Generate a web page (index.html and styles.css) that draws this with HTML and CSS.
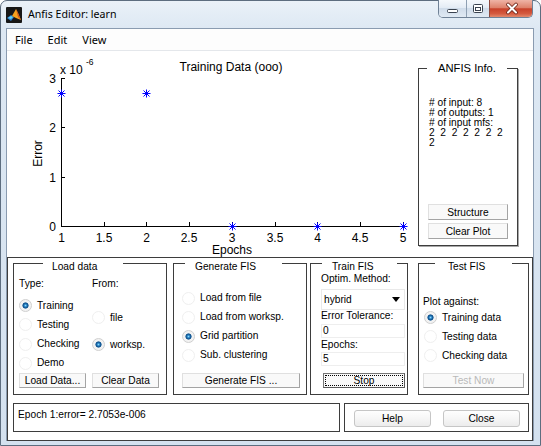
FILE: index.html
```html
<!DOCTYPE html>
<html>
<head>
<meta charset="utf-8">
<title>Anfis Editor: learn</title>
<link rel="stylesheet" href="styles.css">
</head>
<body>
<div class="window">
  <div class="titlebar">
    <svg class="app-icon" width="16" height="16" viewBox="0 0 16 16">
      <rect x="0" y="0" width="16" height="16" rx="1" fill="#171717"/>
      <path d="M1 11 L5 8 L8 10 L5 14 Z" fill="#2a7fd2"/>
      <path d="M2 11 L5 9 L7 10 L5 12 Z" fill="#62d2f2"/>
      <path d="M6 9 L10 2 L12 6 L15 13 L10 11 Z" fill="#f4a21e"/>
      <path d="M10 2 L12 6 L15 13 L12 10 Z" fill="#d2561a"/>
    </svg>
    <span class="title">Anfis Editor: learn</span>
    <div class="caption">
      <div class="cap-btn cap-min">
        <svg width="27" height="17" viewBox="0 0 27 17"><rect x="8.5" y="9.5" width="10" height="3" rx="1" fill="#fff" stroke="#3a4350"/></svg>
      </div>
      <div class="cap-btn cap-max">
        <svg width="22" height="17" viewBox="0 0 22 17"><rect x="6.5" y="4.5" width="9" height="8" rx="1" fill="#fff" stroke="#3a4350"/><rect x="8.5" y="7.5" width="5" height="3" fill="none" stroke="#3a4350"/></svg>
      </div>
      <div class="cap-btn cap-close">
        <svg width="42" height="17" viewBox="0 0 42 17"><path d="M18 4.5 L26 12.5 M26 4.5 L18 12.5" stroke="#6b2418" stroke-width="3.6" stroke-linecap="round"/><path d="M18 4.5 L26 12.5 M26 4.5 L18 12.5" stroke="#ffffff" stroke-width="2" stroke-linecap="round"/></svg>
      </div>
    </div>
  </div>

  <div class="client">
    <div class="menubar">
      <span>File</span>
      <span>Edit</span>
      <span>View</span>
    </div>

    <div class="figure">
      <svg class="plot" width="408" height="206" viewBox="7 51 408 206">
        <defs>
          <path id="ast" d="M-4 0H4M0 -4V4M-3 -3L3 3M-3 3L3 -3" stroke="#0000ff" stroke-width="1" fill="none"/>
        </defs>
        <g stroke="#000" stroke-width="1" fill="none" shape-rendering="crispEdges">
          <path d="M61.5 78V226.5H403.5"/>
          <path d="M104.5 226V222M146.5 226V222M189.5 226V222M232.5 226V222M275.5 226V222M317.5 226V222M360.5 226V222M403.5 226V222"/>
          <path d="M61 177.5H65M61 127.5H65M61 78.5H65"/>
        </g>
        <g class="ticklbl" text-anchor="middle">
          <text x="61.5" y="241.5">1</text>
          <text x="104" y="241.5">1.5</text>
          <text x="146.5" y="241.5">2</text>
          <text x="189" y="241.5">2.5</text>
          <text x="232" y="241.5">3</text>
          <text x="275" y="241.5">3.5</text>
          <text x="317.5" y="241.5">4</text>
          <text x="360" y="241.5">4.5</text>
          <text x="403" y="241.5">5</text>
        </g>
        <g class="ticklbl" text-anchor="end">
          <text x="56" y="230.5">0</text>
          <text x="56" y="181.5">1</text>
          <text x="56" y="131.5">2</text>
          <text x="56" y="82.5">3</text>
        </g>
        <text class="ticklbl" x="60" y="73.5">x 10</text>
        <text class="sup" x="86" y="65">-6</text>
        <text class="ticklbl" x="231" y="71" text-anchor="middle">Training Data (ooo)</text>
        <text class="ticklbl" x="232" y="254" text-anchor="middle">Epochs</text>
        <text class="ticklbl" text-anchor="middle" transform="translate(41.5 153.5) rotate(-90)">Error</text>
        <use href="#ast" x="61.5" y="93.5"/>
        <use href="#ast" x="146.5" y="93.5"/>
        <use href="#ast" x="232.5" y="226.5"/>
        <use href="#ast" x="317.5" y="226.5"/>
        <use href="#ast" x="403.5" y="226.5"/>
      </svg>

      <div class="info-panel">
        <div class="info-title">ANFIS Info.</div>
        <div class="info-text">
          <div class="info-line"># of input: 8</div>
          <div class="info-line"># of outputs: 1</div>
          <div class="info-line"># of input mfs:</div>
          <div class="info-line">2  2  2  2  2  2  2</div>
          <div class="info-line">2</div>
        </div>
        <button class="btn info-btn">Structure</button>
        <button class="btn info-btn info-btn-2">Clear Plot</button>
      </div>
    </div>

    <div class="lower">
      <div class="panel-row">
        <div class="panel p-load">
          <div class="ptitle">Load data</div>
          <div class="cols">
            <div class="col col-type">
              <div class="lbl">Type:</div>
              <div class="radio on first">Training</div>
              <div class="radio">Testing</div>
              <div class="radio">Checking</div>
              <div class="radio">Demo</div>
            </div>
            <div class="col col-from">
              <div class="lbl">From:</div>
              <div class="radio r-file">file</div>
              <div class="radio on r-ws">worksp.</div>
            </div>
          </div>
          <div class="btnrow">
            <button class="btn load-btn">Load Data...</button>
            <button class="btn load-btn">Clear Data</button>
          </div>
        </div>

        <div class="panel p-gen">
          <div class="ptitle">Generate FIS</div>
          <div class="gen-radios">
            <div class="radio r19">Load from file</div>
            <div class="radio r19">Load from worksp.</div>
            <div class="radio r19 on">Grid partition</div>
            <div class="radio r19">Sub. clustering</div>
          </div>
          <button class="btn gen-btn">Generate FIS ...</button>
        </div>

        <div class="panel p-train">
          <div class="ptitle">Train FIS</div>
          <div class="tlbl">Optim. Method:</div>
          <div class="dropdown">
            <span>hybrid</span>
            <svg width="8" height="5" viewBox="0 0 8 5"><path d="M0 0H8L4 5Z" fill="#000"/></svg>
          </div>
          <div class="tlbl">Error Tolerance:</div>
          <div class="edit">0</div>
          <div class="tlbl t-epochs">Epochs:</div>
          <div class="edit e-epochs">5</div>
          <button class="btn stop-btn">Stop</button>
        </div>

        <div class="panel p-test">
          <div class="ptitle">Test FIS</div>
          <div class="plot-against">Plot against:</div>
          <div class="test-radios">
            <div class="radio r19 on">Training data</div>
            <div class="radio r19">Testing data</div>
            <div class="radio r19">Checking data</div>
          </div>
          <button class="btn test-btn" disabled>Test Now</button>
        </div>
      </div>

      <div class="bottom-row">
        <div class="status">Epoch 1:error= 2.7053e-006</div>
        <div class="help-frame">
          <button class="wbtn">Help</button>
          <button class="wbtn">Close</button>
        </div>
      </div>
    </div>
  </div>
</div>
</body>
</html>
```

FILE: styles.css
```css
* { box-sizing: border-box; }

html, body {
  margin: 0;
  padding: 0;
}

body {
  width: 541px;
  height: 446px;
  overflow: hidden;
  background: #ffffff;
  font-family: "Liberation Sans", Arial, sans-serif;
  font-size: 10.2px;
  color: #000;
}

/* ---------- generic controls ---------- */
.btn {
  flex: none;
  font: inherit;
  color: #000;
  padding: 0;
  margin: 0;
  height: 15px;
  line-height: 13px;
  background: #f9f9f9;
  border: 1px solid;
  border-color: #e0e0e0 #a4a4a4 #a4a4a4 #e0e0e0;
  text-align: center;
  white-space: nowrap;
}

.btn:disabled {
  color: #b9b9b9;
}

.radio {
  display: flex;
  align-items: center;
  height: 19.3px;
  line-height: 12px;
  white-space: nowrap;
}

.radio::before {
  content: "";
  flex: none;
  width: 11px;
  height: 11px;
  margin-right: 5px;
  border-radius: 50%;
  border: 1px solid #efefef;
  background: #fff;
}

.radio.on::before {
  border-color: #cfcfcf;
  background: radial-gradient(circle, #8fd8fa 0, #2f8ccc 1.2px, #10508c 2.4px, #1d5f98 2.8px, #f2f2f2 3.4px);
}

.r19 { height: 19px; }

/* ---------- window chrome ---------- */
.window {
  width: 541px;
  height: 446px;
  border: 1px solid #5d6d7f;
  border-radius: 7px 7px 0 0;
  background: linear-gradient(180deg, #eaf1f8 0px, #dde8f3 28px, #d4e1ef 100%);
  padding-bottom: 4px;
  display: flex;
  flex-direction: column;
}

.titlebar {
  flex: none;
  height: 27px;
  display: flex;
  align-items: flex-start;
}

.app-icon {
  flex: none;
  margin: 6px 0 0 5px;
}

.title {
  margin: 5.5px 0 0 6px;
  font-family: "Noto Sans", "Open Sans", sans-serif;
  font-size: 10.6px;
  line-height: 15px;
  color: #000;
}

.caption {
  margin: -1px 7px 0 auto;
  height: 18px;
  display: flex;
  border: 1px solid #6f8196;
  border-top: none;
  border-radius: 0 0 5px 5px;
  overflow: hidden;
}

.cap-btn {
  height: 17px;
  display: flex;
}

.cap-min {
  width: 27px;
  background: linear-gradient(180deg, #f5f8fc 0%, #e4ecf5 45%, #d0dcea 50%, #e0e9f3 100%);
}

.cap-max {
  width: 23px;
  border-left: 1px solid #8e9fb2;
  background: linear-gradient(180deg, #f5f8fc 0%, #e4ecf5 45%, #d0dcea 50%, #e0e9f3 100%);
}

.cap-close {
  width: 43px;
  border-left: 1px solid #8e4a3f;
  background: linear-gradient(180deg, #efb4a6 0%, #de826c 45%, #c8412a 52%, #d45a3f 80%, #e48a6d 100%);
}

/* ---------- client ---------- */
.client {
  flex: 1;
  min-height: 0;
  margin: 0 6px 0 5px;
  border: 1px solid #8a9bb0;
  border-bottom: none;
  background: #fff;
  display: flex;
  flex-direction: column;
}

.menubar {
  flex: none;
  height: 22px;
  border-bottom: 1px solid #e4e7eb;
  display: flex;
  align-items: center;
  padding-left: 8px;
  gap: 15px;
  font-family: "Noto Sans", "Open Sans", sans-serif;
  font-size: 11px;
  background: #fdfdfd;
}

.figure {
  flex: none;
  height: 206px;
  display: flex;
}

.plot {
  flex: none;
  display: block;
}

.ticklbl {
  font-family: "Liberation Sans", Arial, sans-serif;
  font-size: 12px;
  fill: #000;
}

.sup {
  font-family: "Liberation Sans", Arial, sans-serif;
  font-size: 8.5px;
  fill: #000;
}

/* ---------- ANFIS info ---------- */
.info-panel {
  flex: none;
  width: 100px;
  height: 178px;
  margin: 17px 0 0 3px;
  border: 1px solid #3d3d3d;
  box-shadow: 1px 1px 0 #a8a8a8;
  display: flex;
  flex-direction: column;
  padding-bottom: 6px;
}

.info-title {
  flex: none;
  margin: -7px 0 0 8px;
  width: 80px;
  height: 13px;
  line-height: 13px;
  font-size: 11.2px;
  text-align: center;
  background: #fff;
  white-space: nowrap;
}

.info-text {
  margin-top: 22.7px;
  padding-left: 10px;
  font-size: 10.2px;
}

.info-line {
  height: 10px;
  line-height: 10px;
  white-space: pre;
}

.info-panel .info-btn {
  margin: auto 0 0 9px;
  width: 80px;
  height: 16px;
}

.info-panel .info-btn-2 {
  margin-top: 3px;
}

/* ---------- lower area ---------- */
.lower {
  flex: none;
  height: 184px;
  border: 1px solid #3d3d3d;
  padding: 5px 0 0 5px;
}

.panel-row {
  display: flex;
  height: 132px;
}

.panel {
  flex: none;
  height: 132px;
  border: 1px solid #3d3d3d;
  display: flex;
  flex-direction: column;
  padding-bottom: 6px;
}

.ptitle {
  flex: none;
  height: 12px;
  line-height: 12px;
  margin-top: -3px;
  background: #fff;
  white-space: nowrap;
}

.p-load { width: 154px; }
.p-load .ptitle { margin-left: 29px; width: 80px; padding-left: 9px; }

.p-gen { width: 134px; margin-left: 6px; }
.p-gen .ptitle { margin-left: 11px; width: 97px; padding-left: 10px; }

.p-train { width: 98px; margin-left: 3px; }
.p-train .ptitle { margin-left: 11px; width: 75px; padding-left: 10px; }

.p-test { width: 111px; margin-left: 10px; }
.p-test .ptitle { margin-left: 16px; width: 77px; padding-left: 13px; }

/* load data */
.cols {
  display: flex;
  margin-top: 3.5px;
  padding-left: 5px;
}

.col {
  display: flex;
  flex-direction: column;
}

.col-type { width: 73px; }

.lbl {
  height: 13px;
  line-height: 13px;
}

.col-type .first { margin-top: 6.4px; }
.r-file { margin-top: 18.4px; }
.r-ws { margin-top: 7.7px; }

.btnrow {
  margin-top: auto;
  padding-left: 5px;
  display: flex;
  gap: 6px;
}

.btnrow .load-btn { width: 67px; }

/* generate fis */
.gen-radios {
  margin-top: 15.6px;
  padding-left: 8px;
}

.p-gen .gen-btn {
  margin: auto 0 0 8px;
  width: 118px;
}

/* train fis */
.tlbl {
  height: 12px;
  line-height: 12px;
  padding-left: 10px;
  white-space: nowrap;
}

.dropdown {
  margin: 4px 0 0 10px;
  width: 84px;
  height: 21px;
  border: 1px solid #e9e9e9;
  display: flex;
  align-items: center;
  justify-content: space-between;
  padding: 0 4px 0 2px;
}

.edit {
  margin: 2px 0 0 10px;
  width: 84px;
  height: 14px;
  line-height: 12px;
  border: 1px solid #eeeeee;
  padding-left: 1px;
}

.t-epochs { margin-top: 1px; }
.e-epochs { margin-top: 1px; }

.p-train .stop-btn {
  margin: auto 0 0 12px;
  width: 82px;
  border-color: #767676 #5a5a5a #5a5a5a #767676;
  outline: 1px dotted #000;
  outline-offset: -3px;
}

/* test fis */
.plot-against {
  margin-top: 22.5px;
  padding-left: 4px;
  height: 12px;
  line-height: 12px;
}

.test-radios {
  margin-top: 0.5px;
  padding-left: 5px;
}

.p-test .test-btn {
  margin: auto 0 0 4px;
  width: 101px;
}

/* bottom row */
.bottom-row {
  display: flex;
  margin-top: 8px;
}

.status {
  flex: none;
  width: 327px;
  height: 29px;
  border: 1px solid #3d3d3d;
  padding: 4.5px 0 0 4px;
  line-height: 12px;
}

.help-frame {
  flex: none;
  width: 185px;
  height: 29px;
  margin-left: 4px;
  border: 1px solid #3d3d3d;
  display: flex;
  gap: 12px;
  padding: 6px 0 0 9px;
}

.wbtn {
  flex: none;
  font: inherit;
  color: #000;
  margin: 0;
  padding: 0;
  width: 77px;
  height: 17px;
  line-height: 15px;
  border: 1px solid #c6c6c6;
  border-radius: 3px;
  background: linear-gradient(180deg, #fefefe 0%, #f6f6f6 50%, #ececec 100%);
  text-align: center;
}
```
